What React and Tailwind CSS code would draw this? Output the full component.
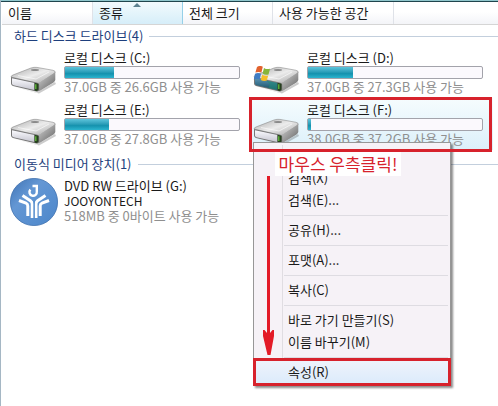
const columns = [
  { label: "이름", width: "w-[91px]" },
  { label: "종류", width: "w-[90px]", sorted: true },
  { label: "전체 크기", width: "w-[90px]" },
  { label: "사용 가능한 공간", width: "w-[121px]" },
];

const drives = [
  { letter: "C", used: 28, info: "37.0GB 중 26.6GB 사용 가능", system: false },
  { letter: "D", used: 26, info: "37.0GB 중 27.3GB 사용 가능", system: true },
  { letter: "E", used: 25, info: "37.0GB 중 27.8GB 사용 가능", system: false },
  { letter: "F", used: 2, info: "38.0GB 중 37.2GB 사용 가능", selected: true },
];

const menuGroups = [
  ["검색(X)", "검색(E)..."],
  ["공유(H)..."],
  ["포맷(A)..."],
  ["복사(C)"],
  ["바로 가기 만들기(S)", "이름 바꾸기(M)"],
  ["속성(R)"],
];

function DiskIcon({ system }) {
  const id = system ? "sys" : "disk";
  return (
    <svg viewBox="0 0 48 28" className="h-7 w-12 shrink-0" aria-hidden="true">
      <defs>
        <linearGradient id={`${id}-top`} x1="0" y1="0" x2="1" y2="1">
          <stop offset="0" stopColor="#a8a8a8" />
          <stop offset="0.5" stopColor="#ececec" />
          <stop offset="1" stopColor="#a0a0a0" />
        </linearGradient>
        <linearGradient id={`${id}-side`} x1="0" y1="0" x2="1" y2="1">
          <stop offset="0" stopColor="#dedede" />
          <stop offset="1" stopColor="#5e5e5e" />
        </linearGradient>
        <linearGradient id={`${id}-front`} x1="0" y1="0" x2="0" y2="1">
          <stop offset="0" stopColor={system ? "#5b93b4" : "#fbfbff"} />
          <stop offset="1" stopColor={system ? "#154e63" : "#c6c6d0"} />
        </linearGradient>
      </defs>
      <path d="M3 20 28 26.5 46 16 47 18 30 27.5Z" fill="#000" opacity="0.2" />
      <path d="M2 11Q2 9.5 5 8.6L22 2Q25 1 28 1.4L44 4.3Q47 5 46 7L30 17.5Z" fill={`url(#${id}-top)`} stroke="#8c8c8c" strokeWidth="0.6" />
      <path d="M30 17 46.3 6.2V14Q46 15.5 44.5 16.4L31 24.8Q29 26 27 25.3Z" fill={`url(#${id}-side)`} />
      <path d="M2 11 27 16.4Q30.5 17 30.2 19V23.5Q30 26 27 25.4L4 20Q2 19.4 2 17.5Z" fill="#767676" />
      <path d="M3 12.2 25.5 17V24L4.5 19.2Q3 18.8 3 17.5Z" fill={`url(#${id}-front)`} />
      {system && (
        <path d="M14 14.5 25.5 17V24L16 22Q20 19 14 14.5Z" fill="#1f8a78" opacity="0.6" />
      )}
      <path d="M25.5 16.8 29.5 17.8V23.6Q29 25.4 27 25L25.5 24.6Z" fill="#27401f" />
      <path d="M26.8 18.2V23" stroke="#68c83c" strokeWidth="1.2" />
      <ellipse cx="26" cy="4" rx="4" ry="1.1" fill="#8a8a8a" />
      <path d="M9 9.5 27 13 40 6" fill="none" stroke="#fff" strokeWidth="1" opacity="0.6" />
      {system && (
        <g>
          <path d="M5 .9Q8 -.9 10.8 .7L9.4 6.6Q6.6 5.2 3.4 6.6Z" fill="#e2622e" />
          <path d="M12 1.9Q14.8 3.8 18 2.7L16.5 8.4Q13.5 9.5 10.6 7.6Z" fill="#86b53a" />
          <path d="M3 7.8Q6 6.2 9 7.8L7.6 13.4Q4.9 12 1.8 13.4Z" fill="#3f7cc4" />
          <path d="M10.2 8.8Q13.2 10.5 16.2 9.4L14.8 14.6Q11.8 15.8 8.8 14Z" fill="#f5be28" />
        </g>
      )}
    </svg>
  );
}

function DvdIcon() {
  return (
    <svg viewBox="0 0 48 48" className="size-12 shrink-0" aria-hidden="true">
      <defs>
        <linearGradient id="dvd" x1="0" y1="0" x2="1" y2="1">
          <stop offset="0" stopColor="#3e72b4" />
          <stop offset="0.35" stopColor="#6497d4" />
          <stop offset="1" stopColor="#4b86ca" />
        </linearGradient>
      </defs>
      <circle cx="24" cy="24" r="23.6" fill="url(#dvd)" stroke="#3d70af" strokeWidth="0.8" />
      <g fill="none" stroke="#fff">
        <path d="M22.5 8H26.8V13.5A3.7 3.7 0 1 1 20.4 11.6" strokeWidth="2.4" />
        <path d="M9 22.5 16 25.2Q17.8 26 17.8 28V38" strokeWidth="3" />
        <path d="M12.5 17.5 20.4 22.8Q22.2 24 22.2 26V40" strokeWidth="3" />
        <path d="M39 22.5 32 25.2Q30.2 26 30.2 28V38" strokeWidth="3" />
        <path d="M35.5 17.5 27.6 22.8Q26 24 26 26V40" strokeWidth="3" />
        <path d="M24.1 23V41" stroke="#5189cb" strokeWidth="1.2" />
      </g>
    </svg>
  );
}

function GroupHeader({ children }) {
  return (
    <div className="flex h-5 items-center gap-1.5 pl-[7px]">
      <h2 className="text-[#1e3f7d]">{children}</h2>
      <span className="h-px flex-1 bg-[#c3cfdd]" />
    </div>
  );
}

function Drive({ drive, children }) {
  const name = `로컬 디스크 (${drive.letter}:)`;
  return (
    <li
      className={`relative flex h-[52px] gap-[7px] pt-1 pl-0.5 ${
        drive.selected ? "bg-linear-to-b from-[#f6fcfe] to-[#dcf0fa]" : ""
      }`}
    >
      <div className="pt-4">
        <DiskIcon system={drive.system} />
      </div>
      <div className="w-44 leading-4">
        <p>{name}</p>
        <div
          role="meter"
          aria-label={name}
          aria-valuenow={drive.used}
          aria-valuemin={0}
          aria-valuemax={100}
          className="h-[13px] rounded-xs border border-[#a3a3ab] bg-[#fbf9fd]"
        >
          <div
            className="h-full bg-linear-to-b from-[#5cc5dc] via-[#1592ae] via-60% to-[#2cb4cf]"
            style={{ width: `${drive.used}%` }}
          />
        </div>
        <p className="whitespace-nowrap text-[#8f8f8f]">{drive.info}</p>
      </div>
      {children}
    </li>
  );
}

function ContextMenu() {
  return (
    <div
      role="menu"
      className="absolute top-11 left-[3px] z-10 w-[198px] border border-[#979797] bg-[#f6f2f7] px-0.5 pt-6 pb-0.5 shadow-[2px_2px_2px_rgba(0,0,0,0.45)]"
    >
      <span className="absolute inset-y-0.5 left-7 w-px bg-[#e0dde2]" />
      {menuGroups.map((items, i) => (
        <div key={items[0]} className="relative">
          {i > 0 && (
            <div className="flex h-2 items-center pl-7">
              <span className="h-px flex-1 bg-[#dedce2]" />
            </div>
          )}
          {items.map((item) => (
            <button
              key={item}
              role="menuitem"
              className={`block h-[22px] w-full pl-8 text-left ${
                item === "속성(R)"
                  ? "rounded-xs bg-linear-to-b from-[#eef3fb] to-[#dcebfb]"
                  : ""
              }`}
            >
              {item}
            </button>
          ))}
        </div>
      ))}
      <span className="absolute -inset-x-px -bottom-px h-7 border-3 border-[#d7222c]" />
    </div>
  );
}

// Red frame, caption and arrow laid over the F: drive and its menu.
function Callout() {
  return (
    <div className="pointer-events-none absolute -top-px -left-px z-20 w-[243px]">
      <div className="h-[55px] border-3 border-[#d7222c]" />
      <p className="ml-[26px] flex h-6 w-[126px] items-center justify-center bg-white text-[17px] whitespace-nowrap text-[#d7222c]">
        마우스 우측클릭!
      </p>
      <svg viewBox="0 0 12 180" className="ml-3.5 h-[180px] w-3" aria-hidden="true">
        <path d="M4 0H7V157L9.5 154H11V160L7.5 179H4.5L0 160V154H1.5L4 157Z" fill="#e31b27" />
      </svg>
    </div>
  );
}

export default function App() {
  return (
    <div className="min-h-screen overflow-hidden border-l border-[#a5b7c4] bg-white font-['Noto_Sans_CJK_KR',sans-serif] text-[13px] leading-4 text-[#1a1a1a]">
      <div className="h-0.5 border-b border-[#20454d] bg-[#8fc6cc]" />
      <div className="ml-px flex h-[23px] border-b border-[#d5d5d5] bg-linear-to-b from-white from-45% to-[#f3f4f8]">
        {columns.map((col) => (
          <button
            key={col.label}
            className={`relative shrink-0 border-r pl-1.5 text-left ${col.width} ${
              col.sorted
                ? "border-[#96d0e8] bg-linear-to-b from-[#f2fafd] to-[#d6eef9]"
                : "border-[#dfe2e8]"
            }`}
          >
            {col.label}
            {col.sorted && (
              <svg viewBox="0 0 8 4" className="absolute top-px left-10 h-1 w-2" aria-hidden="true">
                <path d="M0 4 4 0 8 4Z" fill="#5d8190" />
              </svg>
            )}
          </button>
        ))}
      </div>

      <main className="pt-px pl-1.5">
        <section>
          <GroupHeader>하드 디스크 드라이브(4)</GroupHeader>
          <ul className="grid grid-cols-[repeat(auto-fill,243px)]">
            {drives.map((drive) => (
              <Drive key={drive.letter} drive={drive}>
                {drive.selected && (
                  <>
                    <ContextMenu />
                    <Callout />
                  </>
                )}
              </Drive>
            ))}
          </ul>
        </section>

        <section className="pt-1">
          <GroupHeader>이동식 미디어 장치(1)</GroupHeader>
          <div className="flex gap-1.5 pt-1 pl-[3px]">
            <DvdIcon />
            <div className="leading-[15px]">
              <p>DVD RW 드라이브 (G:)</p>
              <p className="text-[12px]">JOOYONTECH</p>
              <p className="text-[#8f8f8f]">518MB 중 0바이트 사용 가능</p>
            </div>
          </div>
        </section>
      </main>
    </div>
  );
}
